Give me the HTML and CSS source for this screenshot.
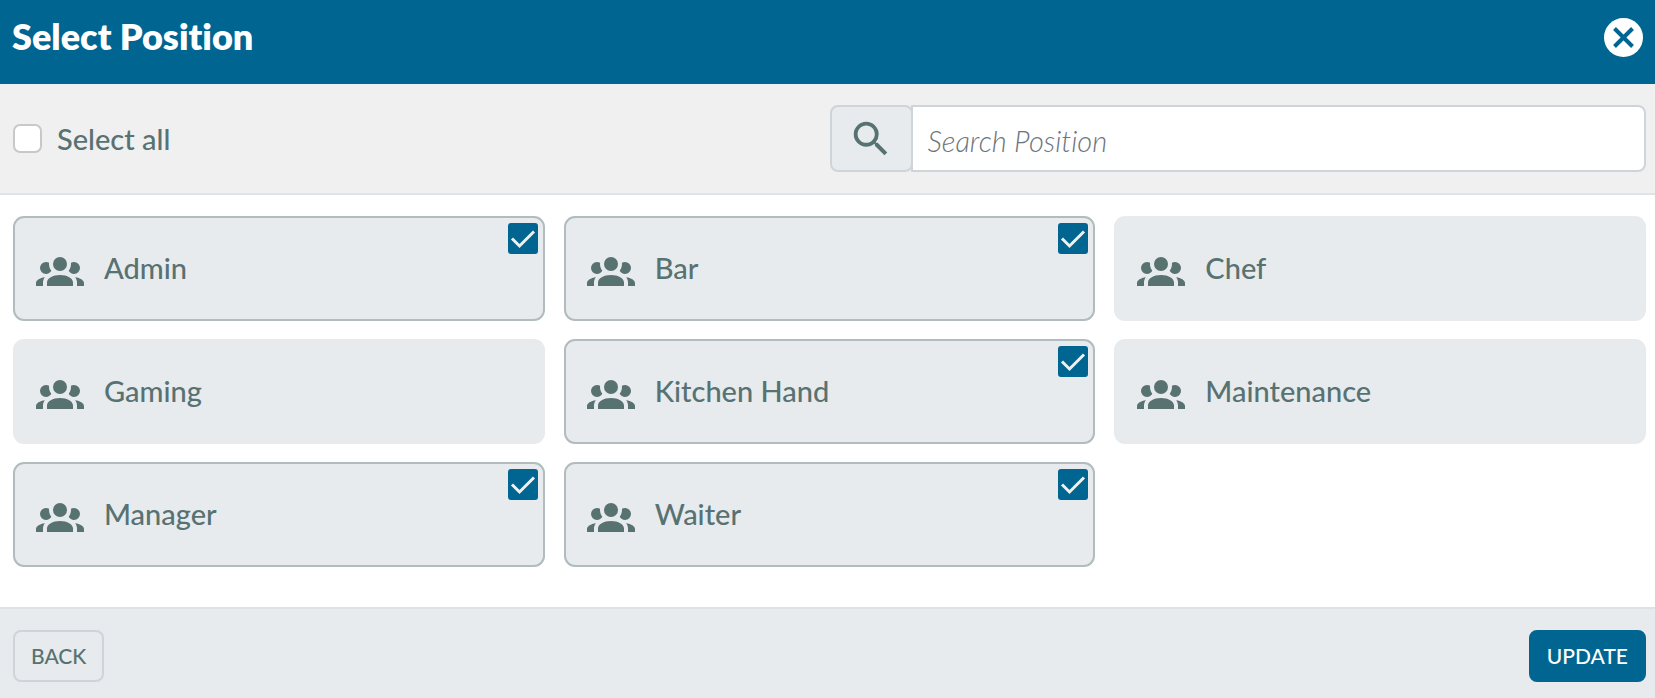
FILE: index.html
```
<!DOCTYPE html>
<html lang="en">
<head>
<meta charset="utf-8">
<title>Select Position</title>
<link rel="stylesheet" href="styles.css">
</head>
<body>
<svg class="sprite" aria-hidden="true">
  <symbol id="group" viewBox="0 0 24 24"><path d="M12,5.5A3.5,3.5 0 0,1 15.5,9A3.5,3.5 0 0,1 12,12.5A3.5,3.5 0 0,1 8.5,9A3.5,3.5 0 0,1 12,5.5M5,8C5.56,8 6.08,8.15 6.53,8.42C6.38,9.85 6.8,11.27 7.66,12.38C7.16,13.34 6.16,14 5,14A3,3 0 0,1 2,11A3,3 0 0,1 5,8M19,8A3,3 0 0,1 22,11A3,3 0 0,1 19,14C17.84,14 16.84,13.34 16.34,12.38C17.2,11.27 17.62,9.85 17.47,8.42C17.92,8.15 18.44,8 19,8M5.5,18.25C5.5,16.18 8.41,14.5 12,14.5C15.59,14.5 18.5,16.18 18.5,18.25V20H5.5V18.25M0,20V18.5C0,17.11 1.89,15.94 4.45,15.6C3.86,16.28 3.5,17.22 3.5,18.25V20H0M24,20H20.5V18.25C20.5,17.22 20.14,16.28 19.55,15.6C22.11,15.94 24,17.11 24,18.5V20Z"/></symbol>
  <symbol id="tick" viewBox="0 0 30 30"><path d="M4 15L11.500 22.500L26 8" fill="none" stroke="currentColor" stroke-width="3"/></symbol>
</svg>
<div class="dialog" role="dialog" aria-labelledby="title">
  <header class="header">
    <h1 class="title" id="title">Select Position</h1>
    <button class="close" type="button" aria-label="Close">
      <svg viewBox="0 0 40 40"><circle cx="20.500" cy="20.500" r="19.500" fill="#fff"/><path d="M11.500 11.500L29.500 29.500M29.500 11.500L11.500 29.500" stroke="#006691" stroke-width="4"/></svg>
    </button>
  </header>
  <div class="toolbar">
    <label class="select-all"><input class="box" type="checkbox">Select all</label>
    <div class="search">
      <button class="search-button" type="button" aria-label="Search">
        <svg viewBox="0 0 24 24"><path d="M15.500 14h-.79l-.28-.27A6.471 6.471 0 0 0 16 9.500 6.500 6.500 0 1 0 9.500 16c1.610 0 3.090-.59 4.230-1.570l.27.28v.79l5 4.990L20.490 19l-4.990-5zm-6 0C7.010 14 5 11.990 5 9.500S7.010 5 9.500 5 14 7.010 14 9.500 11.990 14 9.500 14z"/></svg>
      </button>
      <input class="search-input" type="text" placeholder="Search Position" aria-label="Search Position">
    </div>
  </div>
  <main class="grid">
    <label class="card"><svg class="group"><use href="#group"/></svg><span>Admin</span><input class="check" type="checkbox" checked><svg class="tick"><use href="#tick"/></svg></label>
    <label class="card"><svg class="group"><use href="#group"/></svg><span>Bar</span><input class="check" type="checkbox" checked><svg class="tick"><use href="#tick"/></svg></label>
    <label class="card"><svg class="group"><use href="#group"/></svg><span>Chef</span><input class="check" type="checkbox"><svg class="tick"><use href="#tick"/></svg></label>
    <label class="card"><svg class="group"><use href="#group"/></svg><span>Gaming</span><input class="check" type="checkbox"><svg class="tick"><use href="#tick"/></svg></label>
    <label class="card"><svg class="group"><use href="#group"/></svg><span>Kitchen Hand</span><input class="check" type="checkbox" checked><svg class="tick"><use href="#tick"/></svg></label>
    <label class="card"><svg class="group"><use href="#group"/></svg><span>Maintenance</span><input class="check" type="checkbox"><svg class="tick"><use href="#tick"/></svg></label>
    <label class="card"><svg class="group"><use href="#group"/></svg><span>Manager</span><input class="check" type="checkbox" checked><svg class="tick"><use href="#tick"/></svg></label>
    <label class="card"><svg class="group"><use href="#group"/></svg><span>Waiter</span><input class="check" type="checkbox" checked><svg class="tick"><use href="#tick"/></svg></label>
  </main>
  <footer class="footer">
    <button class="button" type="button">BACK</button>
    <button class="button primary" type="button">UPDATE</button>
  </footer>
</div>
</body>
</html>
```
FILE: styles.css
```
* { box-sizing: border-box; }
body {
  margin: 0;
  background: #fff;
  color: #587272;
  font-family: Lato, "Liberation Sans", sans-serif;
  font-size: 29px;
  font-weight: 500;
  font-variant-ligatures: none;
  line-height: 36px;
}
button, input { font: inherit; font-variant-ligatures: none; color: inherit; margin: 0; }
button { cursor: pointer; }
svg { display: block; fill: currentColor; }
.sprite { position: absolute; width: 0; height: 0; }
.dialog { display: flex; flex-direction: column; min-height: 100vh; }

.header {
  display: flex;
  align-items: flex-start;
  justify-content: space-between;
  padding: 14px 12px 26px;
  background: #006691;
  color: #fff;
}
.title { margin: 0; font-size: 36px; line-height: 44px; font-weight: 800; }
.close { width: 40px; height: 40px; margin-top: 3px; padding: 0; border: 0; background: none; }

.toolbar {
  display: flex;
  align-items: center;
  padding: 21px 9px 21px 13px;
  background: #f0f0f0;
  border-bottom: 2px solid #dee3e8;
}
.select-all { flex: 1; display: flex; align-items: center; gap: 15px; }
.box {
  appearance: none;
  width: 29px;
  height: 29px;
  border: 2px solid #c8c8c8;
  border-radius: 7px;
  background: #fff;
}
.box:checked { background: #006691; }
.search { flex: 1; display: flex; height: 67px; }
.search-button {
  display: flex;
  align-items: center;
  justify-content: center;
  width: 83px;
  padding: 0;
  border: 2px solid #ced4da;
  border-radius: 8px;
  background: #e7ebee;
}
.search-button svg { width: 46px; height: 46px; }
.search-input {
  flex: 1;
  min-width: 0;
  margin-left: -2px;
  padding: 4px 15px 0;
  border: 2px solid #ced4da;
  border-radius: 0 8px 8px 0;
  background: #fff;
}
.search-input::placeholder { color: #6c757d; opacity: 1; font-style: italic; font-weight: 300; }

.grid {
  flex: 1;
  display: grid;
  grid-template-columns: repeat(3, 1fr);
  align-content: start;
  gap: 18px 19px;
  padding: 21px 9px 40px 13px;
}
.card {
  position: relative;
  display: flex;
  align-items: center;
  gap: 20px;
  height: 105px;
  padding: 0 21px 2px;
  border: 2px solid #e7ebee;
  border-radius: 11px;
  background: #e7ebee;
}
.card:has(:checked) { border-color: #b0bcbd; }
.group { width: 48px; height: 48px; margin-top: 4px; }
.check, .tick { position: absolute; top: 5px; right: 5px; width: 30px; height: 31px; }
.check { appearance: none; border-radius: 3px; background: #006691; opacity: 0; }
.check:checked { opacity: 1; }
.tick { color: #f0f0f0; visibility: hidden; pointer-events: none; }
.check:checked + .tick { visibility: visible; }

.footer {
  display: flex;
  justify-content: space-between;
  padding: 21px 9px 16px 13px;
  background: #e7ebee;
  border-top: 2px solid #dee2e6;
}
.button {
  padding: 6px 16px;
  border: 2px solid #ced4da;
  border-radius: 8px;
  background: transparent;
  font-size: 21px;
}
.primary { border-color: #006691; background: #006691; color: #fff; }
```
